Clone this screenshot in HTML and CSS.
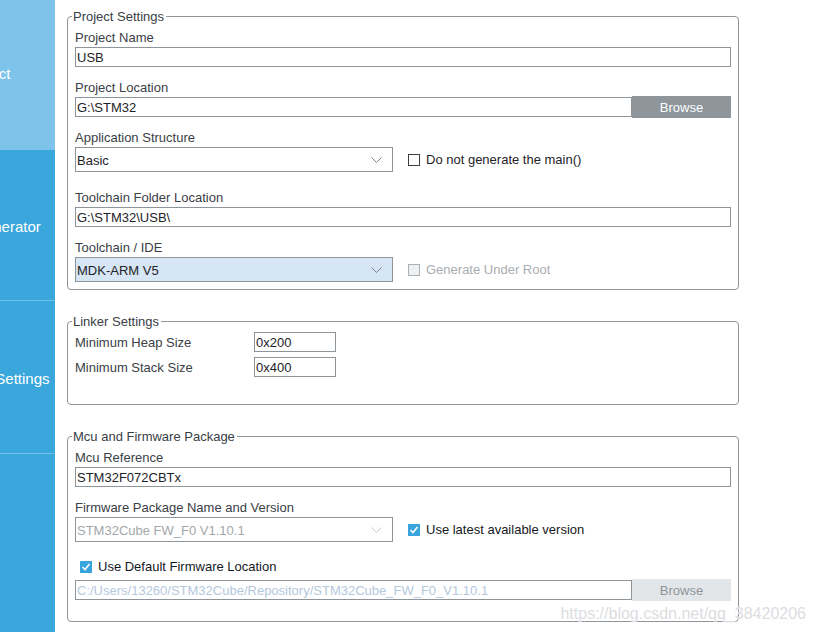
FILE: index.html
```html
<!DOCTYPE html>
<html>
<head>
<meta charset="utf-8">
<link rel="stylesheet" href="styles.css">
</head>
<body>
<div class="app">
  <nav class="sidebar">
    <div class="tab tab-active"><span class="tab-label">Project</span></div>
    <div class="tab"><span class="tab-label">Code Generator</span></div>
    <div class="tab"><span class="tab-label">Advanced Settings</span></div>
    <div class="tab tab-rest"></div>
  </nav>
  <main class="content">
    <fieldset class="panel panel-project">
      <legend>Project Settings</legend>
      <div class="field">
        <div class="label">Project Name</div>
        <div class="input">USB</div>
      </div>
      <div class="field">
        <div class="label">Project Location</div>
        <div class="row">
          <div class="input grow">G:\STM32</div>
          <div class="btn">Browse</div>
        </div>
      </div>
      <div class="field field-select">
        <div class="label">Application Structure</div>
        <div class="row">
          <div class="select">
            <span>Basic</span>
            <svg class="chev" width="11" height="7" viewBox="0 0 11 7"><polyline points="0.5,0.5 5.5,5.5 10.5,0.5" fill="none" stroke="#7d8388" stroke-width="1"/></svg>
          </div>
          <label class="check"><span class="box"></span>Do not generate the main()</label>
        </div>
      </div>
      <div class="field">
        <div class="label">Toolchain Folder Location</div>
        <div class="input">G:\STM32\USB\</div>
      </div>
      <div class="field">
        <div class="label">Toolchain / IDE</div>
        <div class="row">
          <div class="select select-hl">
            <span>MDK-ARM V5</span>
            <svg class="chev" width="11" height="7" viewBox="0 0 11 7"><polyline points="0.5,0.5 5.5,5.5 10.5,0.5" fill="none" stroke="#7d8388" stroke-width="1"/></svg>
          </div>
          <label class="check check-disabled"><span class="box box-disabled"></span>Generate Under Root</label>
        </div>
      </div>
    </fieldset>

    <fieldset class="panel panel-linker">
      <legend>Linker Settings</legend>
      <div class="pair">
        <div class="pair-label">Minimum Heap Size</div>
        <div class="input small">0x200</div>
      </div>
      <div class="pair">
        <div class="pair-label">Minimum Stack Size</div>
        <div class="input small">0x400</div>
      </div>
    </fieldset>

    <fieldset class="panel panel-mcu">
      <legend>Mcu and Firmware Package</legend>
      <div class="field">
        <div class="label">Mcu Reference</div>
        <div class="input">STM32F072CBTx</div>
      </div>
      <div class="field field-select">
        <div class="label">Firmware Package Name and Version</div>
        <div class="row">
          <div class="select select-disabled">
            <span>STM32Cube FW_F0 V1.10.1</span>
            <svg class="chev" width="11" height="7" viewBox="0 0 11 7"><polyline points="0.5,0.5 5.5,5.5 10.5,0.5" fill="none" stroke="#c3c8cc" stroke-width="1"/></svg>
          </div>
          <label class="check check-strong"><span class="box box-checked"><svg width="10" height="10" viewBox="0 0 10 10"><polyline points="1.5,5 4,7.5 8.5,2" fill="none" stroke="#fff" stroke-width="1.6"/></svg></span>Use latest available version</label>
        </div>
      </div>
      <label class="check check-strong check-line"><span class="box box-checked"><svg width="10" height="10" viewBox="0 0 10 10"><polyline points="1.5,5 4,7.5 8.5,2" fill="none" stroke="#fff" stroke-width="1.6"/></svg></span>Use Default Firmware Location</label>
      <div class="row">
        <div class="input grow input-disabled">C:/Users/13260/STM32Cube/Repository/STM32Cube_FW_F0_V1.10.1</div>
        <div class="btn btn-disabled">Browse</div>
      </div>
    </fieldset>
  </main>
</div>
<div class="watermark">https://blog.csdn.net/qq_38420206</div>
</body>
</html>
```

FILE: styles.css
```css
html, body {
  margin: 0;
  padding: 0;
  background: #ffffff;
  width: 815px;
  height: 632px;
  overflow: hidden;
}

body {
  font-family: "Liberation Sans", Arial, sans-serif;
  font-size: 13px;
  color: #333a40;
  position: relative;
}

.app {
  display: flex;
  height: 632px;
}

/* Sidebar */
.sidebar {
  width: 55px;
  flex: none;
  display: flex;
  flex-direction: column;
  overflow: hidden;
  background: #39a6dc;
}

.tab {
  height: 150px;
  flex: none;
  display: flex;
  align-items: center;
  border-bottom: 1px solid #74bfe8;
  color: #ffffff;
  font-size: 15px;
}

.tab-active {
  background: #7ec4ea;
  border-bottom: none;
  padding-bottom: 4px;
  height: 146px;
}

.tab:nth-child(2) {
  padding-top: 2px;
  height: 148px;
}

.tab:nth-child(3) {
  padding-top: 2px;
  height: 150px;
}

.tab-rest {
  flex: 1;
  border-bottom: none;
}

.tab-label {
  display: block;
  width: 140px;
  margin-left: -83px;
  text-align: center;
  white-space: nowrap;
  flex: none;
}

/* Content */
.content {
  flex: 1;
  padding: 8px 0 0 12px;
}

.panel {
  width: 656px;
  margin: 0 0 23px 0;
  padding: 0 7px;
  border: 1px solid #8d959b;
  border-radius: 4px;
  box-sizing: content-box;
}

.panel legend {
  padding: 1px 2px 0 1px;
  margin-left: -3px;
  line-height: 16px;
  font-size: 13px;
  color: #3a4046;
}

.panel-project {
  padding-bottom: 7px;
}

.panel-linker {
  padding-bottom: 27px;
}

.panel-mcu {
  padding-bottom: 21px;
}

.field {
  margin-top: 12px;
}

.panel legend + .field {
  margin-top: 4px;
}

.field-select + .field {
  margin-top: 17px;
}

.label {
  line-height: 16px;
  padding-top: 1px;
  margin-bottom: 1px;
  color: #3a4046;
}

.input {
  height: 17px;
  padding: 1px 1px 0 1px;
  line-height: 18px;
  border: 1px solid #8d959b;
  color: #1e2328;
  white-space: nowrap;
  overflow: hidden;
  background: #fff;
}

.input-disabled {
  color: #b4c8dc;
}

.row {
  display: flex;
  align-items: center;
}

.grow {
  flex: 1;
}

.btn {
  width: 99px;
  height: 22px;
  line-height: 23px;
  margin: -1px 0 -1px 0;
  text-align: center;
  background: #8e969c;
  color: #ffffff;
  flex: none;
}

.btn-disabled {
  background: #e3e6e9;
  color: #8e9499;
}

.select {
  border: 1px solid #8d959b;
  display: flex;
  align-items: center;
  justify-content: space-between;
  padding: 1px 10px 0 1px;
  box-sizing: content-box;
  height: 22px;
  width: 305px;
  color: #1e2328;
  flex: none;
}

.select-hl {
  background: #d7e6f4;
}

.select-disabled {
  color: #a3a7ab;
}

.chev {
  display: block;
}

.check {
  display: flex;
  align-items: center;
  margin-left: 15px;
  line-height: 16px;
  color: #1e2328;
  white-space: nowrap;
}

.check-disabled {
  color: #a9adb1;
}

.check-strong {
  color: #15191d;
}

.box {
  width: 10px;
  height: 10px;
  border: 1px solid #3a3f44;
  background: #fff;
  margin-right: 6px;
  display: flex;
  align-items: center;
  justify-content: center;
  flex: none;
}

.box-disabled {
  border-color: #a9b0b6;
  background: #eef0f2;
}

.box-checked {
  width: 12px;
  height: 12px;
  border: none;
  background: #3aa4dc;
}

.check-line {
  margin: 17px 0 5px 5px;
}

/* Linker */
.pair {
  display: flex;
  align-items: center;
  margin-top: 5px;
}

.panel legend + .pair {
  margin-top: 2px;
}

.pair-label {
  width: 179px;
  flex: none;
  padding-top: 1px;
  color: #3a4046;
}

.small {
  width: 78px;
}

/* Watermark overlay */
.watermark {
  position: absolute;
  right: 9px;
  bottom: 9px;
  font-size: 16px;
  color: #dcdddf;
  text-shadow: 0 0 2px #ffffff, 0 0 1px #ffffff;
  white-space: nowrap;
}
```
